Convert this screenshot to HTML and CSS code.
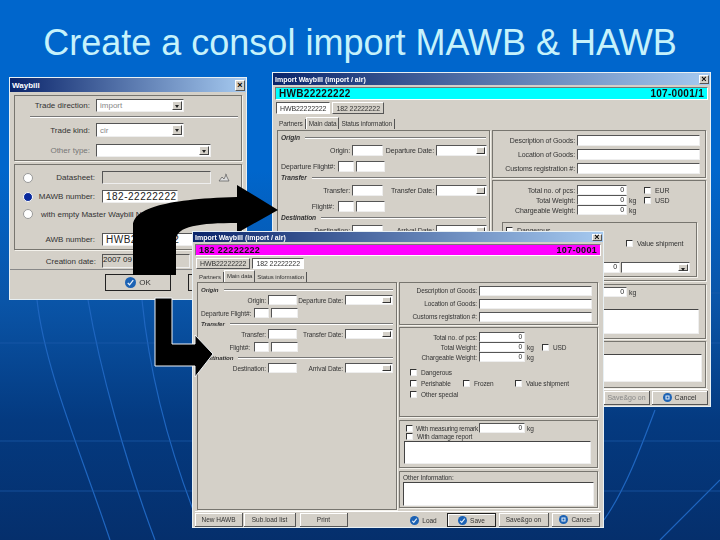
FILE: index.html
```html
<!DOCTYPE html>
<html lang="en">
    <head>
        <meta charset="UTF-8" />
        <title>Create a consol import MAWB &amp; HAWB</title>
        <link rel="stylesheet" href="styles.css">
    </head>

    <body>
        <main class="slide">
            <svg class="bg_lines" viewBox="0 0 720 540">
                <path d="M37 300C45 370 80 450 110 540M88 300C100 370 125 460 155 540M142 300C150 380 170 450 195 515" />
                <path d="M655 410C640 450 625 490 604 520M720 480C700 500 680 520 660 540" />
                <path class="thin" d="M0 343H155M0 441H195M0 491H195M604 441H720M604 491H720M708 293H720M708 343H720" />
            </svg>

            <h1 class="slide_title">Create a consol import MAWB &amp; HAWB</h1>

            <!-- small dialog on the left -->
            <section class="win win_a">
                <header class="win_bar">Waybill<span class="win_x">×</span></header>
                <div class="panel wb_top">
                    <div class="wb_row"><label>Trade direction:</label><div class="sel w88"><span>import</span><i></i></div></div>
                    <hr class="wb_line">
                    <div class="wb_row r2"><label>Trade kind:</label><div class="sel w88"><span>cir</span><i></i></div></div>
                    <div class="wb_row r3"><label class="dim">Other type:</label><div class="sel w115"><span></span><i></i></div></div>
                </div>
                <div class="panel wb_mid">
                    <div class="wb_radio"><b class="radio"></b><label>Datasheet:</label><div class="box grey w109"></div>
                        <svg class="sheet_ico" viewBox="0 0 12 10"><path d="M1 8l3-4 2 2 2-4 3 6zM7 1l2 1" /></svg>
                    </div>
                    <div class="wb_radio"><b class="radio on"></b><label>MAWB number:</label><div class="box w76 big">182-22222222</div></div>
                    <div class="wb_radio r_empty"><b class="radio"></b><span>with empty Master Waybill No.</span></div>
                    <div class="wb_radio r_awb"><b class="radio none"></b><label>AWB number:</label><div class="box w109 big">HWB22222222</div></div>
                </div>
                <div class="wb_date"><label>Creation date:</label><div class="box grey w88">2007 09 24</div></div>
                <footer class="wb_foot">
                    <button class="btn ok_btn">
                        <svg class="ok_ico" viewBox="0 0 12 12"><circle cx="6" cy="6" r="6" /><path d="M3 6.5l2 2 4-5" /></svg>OK
                    </button>
                    <button class="btn ok_btn">
                        <svg class="ok_ico" viewBox="0 0 12 12"><circle cx="6" cy="6" r="6" /><path d="M3.5 3.5l5 5M8.5 3.5l-5 5" /></svg>Cancel
                    </button>
                </footer>
            </section>

            <!-- house waybill window -->
            <section class="win win_b">
                <header class="win_bar">Import Waybill (import / air)<span class="win_x">×</span></header>
                <div class="band band_cyan"><span>HWB22222222</span><span>107-0001/1</span></div>
                <nav class="doc_tabs"><a class="on">HWB22222222</a><a>182 22222222</a></nav>
                <nav class="sub_tabs"><a>Partners</a><a class="on">Main data</a><a>Status information</a></nav>
                <div class="panes">
                    <div class="panel route">
                        <div class="route_head"><em>Origin</em></div>
                        <div class="route_row"><label>Origin:</label><div class="box"></div><label>Departure Date:</label><div class="box date"><i></i></div></div>
                        <div class="flight_row"><label>Departure Flight#:</label><div class="box"></div><div class="box"></div></div>
                        <div class="route_head"><em>Transfer</em></div>
                        <div class="route_row"><label>Transfer:</label><div class="box"></div><label>Transfer Date:</label><div class="box date"><i></i></div></div>
                        <div class="flight_row"><label>Flight#:</label><div class="box"></div><div class="box"></div></div>
                        <div class="route_head"><em>Destination</em></div>
                        <div class="route_row"><label>Destination:</label><div class="box"></div><label>Arrival Date:</label><div class="box date"><i></i></div></div>
                    </div>
                    <div class="stack">
                        <div class="panel p_goods">
                            <div class="field"><label>Description of Goods:</label><div class="box"></div></div>
                            <div class="field"><label>Location of Goods:</label><div class="box"></div></div>
                            <div class="field"><label>Customs registration #:</label><div class="box"></div></div>
                        </div>
                        <div class="panel p_weight">
                            <div class="num_row"><label>Total no. of pcs:</label><div class="box num">0</div><span></span><label class="chk cur"><b></b>EUR</label></div>
                            <div class="num_row"><label>Total Weight:</label><div class="box num">0</div><span>kg</span><label class="chk cur"><b></b>USD</label></div>
                            <div class="num_row"><label>Chargeable Weight:</label><div class="box num">0</div><span>kg</span></div>
                            <fieldset class="goods_box">
                                <div class="chk_row"><label class="chk"><b></b>Dangerous</label></div>
                                <div class="chk_row end"><label class="chk"><b></b>Value shipment</label></div>
                                <div class="sel_row"><div class="box num">0</div><div class="sel"><span></span><i></i></div></div>
                            </fieldset>
                        </div>
                        <div class="panel p_remark">
                            <div class="remark_row"><label class="chk"><b></b>With measuring remark</label><div class="box num">0</div><span>kg</span></div>
                            <label class="chk"><b></b>With damage report</label>
                            <div class="box area"></div>
                        </div>
                        <div class="panel p_other">
                            <div class="box area"></div>
                        </div>
                    </div>
                </div>
                <footer class="foot">
                    <button class="btn spacer">Save&amp;go on</button>
                    <button class="btn cancel_btn"><svg class="ok_ico" viewBox="0 0 12 12"><circle cx="6" cy="6" r="6" /><path d="M4 4h4v4H4z" /></svg>Cancel</button>
                </footer>
            </section>

            <svg class="arrow arrow_up" viewBox="0 0 720 540">
                <path d="M133 275V226C133 210 160 199 237 197V185L278 210L237 233V223C200 223 176 226 176 240V275Z" />
            </svg>

            <!-- master waybill window -->
            <section class="win win_c">
                <header class="win_bar">Import Waybill (import / air)<span class="win_x">×</span></header>
                <div class="band band_pink"><span>182 22222222</span><span>107-0001</span></div>
                <nav class="doc_tabs"><a>HWB22222222</a><a class="on">182 22222222</a></nav>
                <nav class="sub_tabs"><a>Partners</a><a class="on">Main data</a><a>Status information</a></nav>
                <div class="panes">
                    <div class="panel route">
                        <div class="route_head"><em>Origin</em></div>
                        <div class="route_row"><label>Origin:</label><div class="box"></div><label>Departure Date:</label><div class="box date"><i></i></div></div>
                        <div class="flight_row"><label>Departure Flight#:</label><div class="box"></div><div class="box"></div></div>
                        <div class="route_head"><em>Transfer</em></div>
                        <div class="route_row"><label>Transfer:</label><div class="box"></div><label>Transfer Date:</label><div class="box date"><i></i></div></div>
                        <div class="flight_row"><label>Flight#:</label><div class="box"></div><div class="box"></div></div>
                        <div class="route_head"><em>Destination</em></div>
                        <div class="route_row"><label>Destination:</label><div class="box"></div><label>Arrival Date:</label><div class="box date"><i></i></div></div>
                    </div>
                    <div class="stack">
                        <div class="panel p_goods">
                            <div class="field"><label>Description of Goods:</label><div class="box"></div></div>
                            <div class="field"><label>Location of Goods:</label><div class="box"></div></div>
                            <div class="field"><label>Customs registration #:</label><div class="box"></div></div>
                        </div>
                        <div class="panel p_weight">
                            <div class="num_row"><label>Total no. of pcs:</label><div class="box num">0</div></div>
                            <div class="num_row"><label>Total Weight:</label><div class="box num">0</div><span>kg</span><label class="chk cur"><b></b>USD</label></div>
                            <div class="num_row"><label>Chargeable Weight:</label><div class="box num">0</div><span>kg</span></div>
                            <div class="chk_grid">
                                <label class="chk wide"><b></b>Dangerous</label>
                                <label class="chk"><b></b>Perishable</label><label class="chk"><b></b>Frozen</label><label class="chk"><b></b>Value shipment</label>
                                <label class="chk wide"><b></b>Other special</label>
                            </div>
                        </div>
                        <div class="panel p_remark">
                            <div class="remark_row"><label class="chk"><b></b>With measuring remark</label><div class="box num">0</div><span>kg</span></div>
                            <label class="chk"><b></b>With damage report</label>
                            <div class="box area"></div>
                        </div>
                        <div class="panel p_other">
                            <p>Other Information:</p>
                            <div class="box area"></div>
                        </div>
                    </div>
                </div>
                <footer class="foot">
                    <button class="btn">New HAWB</button>
                    <button class="btn sub_btn">Sub.load list</button>
                    <button class="btn print_btn">Print</button>
                    <button class="btn load_btn"><svg class="ok_ico" viewBox="0 0 12 12"><circle cx="6" cy="6" r="6" /><path d="M3 6.5l2 2 4-5" /></svg>Load</button>
                    <button class="btn save_btn"><svg class="ok_ico" viewBox="0 0 12 12"><circle cx="6" cy="6" r="6" /><path d="M3 6.5l2 2 4-5" /></svg>Save</button>
                    <button class="btn go_btn">Save&amp;go on</button>
                    <button class="btn"><svg class="ok_ico" viewBox="0 0 12 12"><circle cx="6" cy="6" r="6" /><path d="M4 4h4v4H4z" /></svg>Cancel</button>
                </footer>
            </section>

            <svg class="arrow arrow_down" viewBox="0 0 720 540">
                <path d="M155 298H172V344H195V335L213 354L195 377V366H155Z" />
            </svg>
        </main>
    </body>
</html>
```

FILE: styles.css
```css
* {
    box-sizing: border-box;
    padding: 0;
    margin: 0;
}
body {
    width: 720px;
    height: 540px;
    overflow: hidden;
    font-family: "Liberation Sans", Arial, sans-serif;
}
.slide {
    position: relative;
    width: 720px;
    height: 540px;
    overflow: hidden;
    background: linear-gradient(#0066cc 0, #0066cc 170px, #0a55a8 300px, #043a80 420px, #052f6c 540px);
}
.bg_lines {
    position: absolute;
    inset: 0;
    fill: none;
    stroke: #1f66c0;
    stroke-width: 1.2;
}
.bg_lines .thin {
    stroke: #1c5cac;
    stroke-width: 0.7;
}
.slide_title {
    position: relative;
    padding-top: 23px;
    text-align: center;
    font-size: 36px;
    line-height: 40px;
    font-weight: 400;
    color: #c6f2fb;
}

/* windows */
.win {
    position: absolute;
    background-color: #d4d0c8;
    border: 1px solid #e8f0f4;
    color: #333;
    filter: blur(0.35px);
}
.win_a {
    left: 9px;
    top: 77px;
    width: 238px;
    height: 223px;
    z-index: 1;
    font-size: 8px;
}
.win_b {
    left: 272px;
    top: 72px;
    width: 439px;
    height: 335px;
    z-index: 2;
    font-size: 7px;
    letter-spacing: -0.1px;
    --bar: 12px;
    --band: 13px;
    --band-font: 10px;
    --tab: 12px;
    --sub-top: 4px;
    --sub-bot: 1px;
    --sub-font: 6.5px;
    --pane-l: 213px;
    --pane-r: 214px;
    --pane-h: 258px;
    --c1: 71px;
    --c2: 31px;
    --c3: 53px;
    --c4: 51px;
    --fl: 55px;
    --f1: 16px;
    --f2: 29px;
    --row: 11px;
    --row-top: 3px;
    --row-bot: 5px;
    --lw: 84px;
    --num: 50px;
}
.win_c {
    left: 192px;
    top: 231px;
    width: 412px;
    height: 297px;
    z-index: 4;
    font-size: 6.5px;
    letter-spacing: -0.1px;
    --bar: 10px;
    --band: 12px;
    --band-font: 9px;
    --tab: 11px;
    --sub-top: 2px;
    --sub-bot: 0px;
    --sub-font: 6px;
    --pane-l: 200px;
    --pane-r: 199px;
    --pane-h: 228px;
    --c1: 67px;
    --c2: 29px;
    --c3: 48px;
    --c4: 48px;
    --fl: 51px;
    --f1: 15px;
    --f2: 27px;
    --row: 10px;
    --row-top: 1px;
    --row-bot: 3px;
    --lw: 79px;
    --num: 46px;
}
.win_bar {
    display: flex;
    justify-content: space-between;
    align-items: center;
    height: var(--bar, 14px);
    padding: 0 1px 0 2px;
    background: linear-gradient(90deg, #0a246a, #a6caf0);
    color: #fff;
    font-weight: 700;
    font-size: 7px;
    letter-spacing: 0;
    white-space: nowrap;
}
.win_a .win_bar {
    font-size: 8px;
}
.win_x {
    display: flex;
    justify-content: center;
    align-items: center;
    width: 10px;
    height: calc(100% - 3px);
    background-color: #d4d0c8;
    border: 1px solid #555;
    border-color: #fff #555 #555 #fff;
    color: #000;
    font-size: 9px;
    line-height: 1;
}
.band {
    display: flex;
    justify-content: space-between;
    align-items: center;
    height: var(--band);
    margin: 2px 2px 0;
    padding: 0 3px;
    border: 1px solid #999;
    border-color: #777 #fff #fff #777;
    color: #111;
    font-weight: 700;
    font-size: var(--band-font);
    letter-spacing: 0.3px;
}
.band_cyan {
    background-color: #00ffff;
}
.band_pink {
    background-color: #ff00ff;
}

/* tabs */
.doc_tabs {
    display: flex;
    gap: 2px;
    margin: 2px 0 0 3px;
    height: var(--tab);
    font-size: 7px;
}
.doc_tabs a {
    display: flex;
    align-items: center;
    padding: 0 3px;
    border: 1px solid #555;
    border-color: #fff #555 #555 #fff;
}
.doc_tabs a.on {
    background-color: #fff;
    border-color: #555 #fff #fff #555;
}
.sub_tabs {
    display: flex;
    margin: var(--sub-top) 0 var(--sub-bot) 4px;
    height: 11px;
    align-items: flex-end;
    font-size: var(--sub-font);
}
.sub_tabs a {
    padding: 0 2px;
    height: 10px;
    line-height: 10px;
    border-right: 1px solid #555;
    white-space: nowrap;
}
.sub_tabs a.on {
    height: 12px;
    line-height: 11px;
    border-top: 1px solid #fff;
    border-left: 1px solid #fff;
}

/* panels */
.panel {
    border: 1px solid #77756f;
    box-shadow: 1px 1px 0 #f4f2ec;
}
.panes {
    display: grid;
    grid-template-columns: var(--pane-l) var(--pane-r);
    gap: 2px;
    height: var(--pane-h);
    margin: 0 0 0 4px;
}
.route {
    padding: 1px 3px;
}
.route_head {
    display: flex;
    align-items: center;
    gap: 5px;
    height: 9px;
    margin-top: 1px;
}
.route_head em {
    font-weight: 700;
    font-size: 0.95em;
}
.route_head::after {
    content: "";
    flex: 1;
    border-top: 1px solid #777;
    border-bottom: 1px solid #fff;
}
.route_row {
    display: grid;
    grid-template-columns: var(--c1) var(--c2) var(--c3) var(--c4);
    align-items: center;
    height: var(--row);
    margin: var(--row-top) 0 var(--row-bot);
}
.flight_row {
    display: grid;
    grid-template-columns: var(--fl) var(--f1) var(--f2);
    gap: 2px;
    align-items: center;
    height: var(--row);
    margin-top: 1px;
}
.route_row label,
.flight_row label,
.field label,
.num_row label {
    padding-right: 2px;
    text-align: right;
    white-space: nowrap;
}
.box {
    height: 100%;
    background-color: #fff;
    border: 1px solid #555;
    border-color: #555 #eee #eee #555;
    color: #222;
    white-space: nowrap;
    overflow: hidden;
}
.date {
    display: flex;
    justify-content: flex-end;
    padding: 1px;
}
.date i {
    width: 9px;
    background-color: #d4d0c8;
    border: 1px solid #444;
    border-color: #fff #333 #333 #fff;
}
.stack {
    display: flex;
    flex-direction: column;
}
.p_goods {
    display: flex;
    flex-direction: column;
    justify-content: center;
    gap: 3px;
    padding-right: 5px;
}
.field {
    display: grid;
    grid-template-columns: var(--lw) 1fr;
    align-items: center;
    height: var(--row);
}
.num_row {
    display: grid;
    grid-template-columns: var(--lw) var(--num) 14px auto;
    align-items: center;
    height: 10px;
}
.num_row span,
.remark_row span {
    padding-left: 2px;
}
.num {
    text-align: right;
    padding-right: 2px;
    line-height: 8px;
}
.chk {
    display: flex;
    align-items: center;
    gap: 4px;
    white-space: nowrap;
}
.chk b {
    flex: none;
    width: 7px;
    height: 7px;
    background-color: #fff;
    border: 1px solid #333;
    border-color: #333 #eee #eee #333;
}
.chk.cur {
    padding-left: 3px;
}
.p_remark {
    padding: 2px 4px 0;
}
.p_remark > .chk,
.remark_row .chk {
    padding-left: 2px;
}
.p_remark .area {
    margin-top: 1px;
}
.remark_row {
    display: flex;
    align-items: center;
    height: 10px;
}
.remark_row .chk {
    flex: none;
    width: 75px;
    gap: 3px;
    letter-spacing: -0.25px;
}
.remark_row .num {
    width: var(--num);
}
.p_other {
    padding: 3px 3px 0;
}
.p_other .area {
    margin-top: 1px;
}
.area {
    border-color: #444 #eee #eee #444;
}

/* window b heights */
.win_b .p_goods {
    height: 48px;
}
.win_b .p_weight {
    height: 101px;
    margin-top: 2px;
    padding-top: 4px;
}
.win_b .p_remark {
    height: 55px;
    margin-top: 3px;
}
.win_b .p_remark .area {
    height: 25px;
    margin-top: 5px;
    margin-right: 2px;
}
.win_b .p_other {
    height: 47px;
    margin-top: 2px;
    padding-top: 12px;
}
.win_b .p_other .area {
    height: 28px;
    margin-top: 0;
}
.win_b .remark_row .chk {
    width: 80px;
}
.goods_box {
    height: 55px;
    margin: 7px 8px 0 9px;
    padding: 4px 3px 0;
    border: 1px solid #77756f;
    box-shadow: 1px 1px 0 #f4f2ec;
}
.chk_row {
    height: 10px;
}
.chk_row.end {
    margin-top: 3px;
    padding-left: 120px;
}
.sel_row {
    display: flex;
    justify-content: flex-end;
    gap: 1px;
    height: 11px;
    margin-top: 12px;
    padding-right: 3px;
}
.sel_row .num {
    width: 50px;
}
.sel_row .sel {
    width: 69px;
}

/* window c heights */
.win_c .p_goods {
    height: 43px;
}
.win_c .p_weight {
    height: 90px;
    margin-top: 2px;
    padding-top: 4px;
}
.win_c .p_remark {
    height: 48px;
    margin-top: 3px;
}
.win_c .p_remark .area {
    height: 23px;
    margin-right: 2px;
}
.win_c .p_other {
    height: 37px;
    margin-top: 3px;
    padding-top: 2px;
}
.win_c .p_other .area {
    height: 24px;
}
.chk_grid {
    display: grid;
    grid-template-columns: 53px 52px 70px;
    grid-auto-rows: 8px;
    row-gap: 3px;
    margin: 6px 0 0 10px;
}
.chk_grid .wide {
    grid-column: 1 / -1;
}

/* bottom buttons */
.foot {
    display: flex;
    gap: 1px;
    margin: 1px 2px 0;
    padding-top: 1px;
    border-top: 1px solid #fff;
}
.win_b .foot {
    justify-content: flex-end;
}
.btn {
    display: flex;
    justify-content: center;
    align-items: center;
    gap: 3px;
    height: 14px;
    width: 48px;
    padding: 0;
    background-color: #d4d0c8;
    border: 0;
    border-right: 1px solid #555;
    border-bottom: 1px solid #555;
    box-shadow: inset 1px 1px 0 #fff;
    font: inherit;
    color: #333;
}
.win_b .spacer {
    color: #888;
    width: 46px;
    margin-right: 1px;
}
.cancel_btn {
    width: 56px;
}
.sub_btn {
    width: 52px;
}
.print_btn {
    margin: 0 61px 0 3px;
}
.load_btn {
    width: 27px;
    margin-right: 9px;
    border: 0;
    box-shadow: none;
}
.save_btn {
    width: 49px;
    border: 1px solid #222;
    margin-right: 2px;
}
.go_btn {
    width: 50px;
    margin-right: 2px;
}
.ok_ico {
    flex: none;
    width: 9px;
    height: 9px;
    fill: #1c62b4;
}
.ok_ico path {
    fill: none;
    stroke: #e6f0fa;
    stroke-width: 1.4;
}

/* waybill dialog */
.wb_top,
.wb_mid {
    margin: 3px 4px 0;
}
.wb_top {
    height: 66px;
    padding-top: 3px;
}
.wb_mid {
    height: 86px;
    padding-top: 6px;
    margin-top: 3px;
}
.wb_row {
    display: flex;
    align-items: center;
    height: 13px;
}
.wb_row label {
    width: 75px;
    text-align: right;
    margin-right: 6px;
    white-space: nowrap;
}
.wb_row label.dim {
    color: #777;
}
.wb_row.r2 {
    height: 14px;
}
.wb_row.r3 {
    margin-top: 7px;
}
.wb_line {
    margin: 4px 3px 5px 15px;
    border: 0;
    border-top: 1px solid #777;
    border-bottom: 1px solid #fff;
}
.sel {
    display: flex;
    justify-content: space-between;
    height: 100%;
    background-color: #fff;
    border: 1px solid #555;
    border-color: #555 #eee #eee #555;
    padding: 0 1px 0 3px;
    color: #888;
    align-items: center;
}
.sel i {
    position: relative;
    width: 10px;
    height: calc(100% - 2px);
    background-color: #d4d0c8;
    border: 1px solid #333;
    border-color: #fff #444 #444 #fff;
}
.sel i::after {
    content: "";
    position: absolute;
    left: 2px;
    top: 3px;
    border: 2px solid transparent;
    border-top: 3px solid #222;
}
.w88 {
    width: 88px;
}
.w115 {
    width: 115px;
}
.w109 {
    width: 109px;
}
.w76 {
    width: 76px;
}
.grey {
    background-color: #d4d0c8;
}
.big {
    padding-left: 3px;
    font-size: 10px;
    line-height: 12px;
    letter-spacing: 0.5px;
}
.wb_radio {
    display: flex;
    align-items: center;
    height: 13px;
    margin-bottom: 6px;
    padding-left: 8px;
    white-space: nowrap;
}
.wb_radio label {
    width: 62px;
    margin-right: 7px;
    text-align: right;
}
.wb_radio .radio {
    flex: none;
    width: 10px;
}
.radio {
    height: 10px;
    background-color: #fff;
    border: 1px solid #999;
    border-radius: 50%;
}
.radio.on {
    background-color: #0a2a9c;
    border-color: #fff;
}
.radio.none {
    background: none;
    border: 0;
}
.r_empty {
    height: 10px;
    margin-bottom: 14px;
}
.r_empty span {
    margin-left: 8px;
}
.sheet_ico {
    width: 12px;
    height: 10px;
    margin-left: 7px;
    fill: #ddd;
    stroke: #666;
    stroke-width: 0.8;
}
.wb_date {
    display: flex;
    align-items: center;
    height: 14px;
    margin-top: 4px;
}
.wb_date label {
    width: 86px;
    margin-right: 6px;
    text-align: right;
}
.wb_foot {
    display: flex;
    gap: 17px;
    height: 22px;
    margin-top: 1px;
    padding: 4px 0 0 95px;
    border-top: 1px solid #888;
}
.ok_btn {
    flex: none;
    width: 66px;
    height: 17px;
    border: 1px solid #222;
    box-shadow: none;
}
.ok_btn .ok_ico {
    width: 11px;
    height: 11px;
}

/* arrows */
.arrow {
    position: absolute;
    inset: 0;
    fill: #000;
}
.arrow_up {
    z-index: 3;
}
.arrow_down {
    z-index: 5;
    stroke: #f0f4f8;
    stroke-width: 1;
}
```
